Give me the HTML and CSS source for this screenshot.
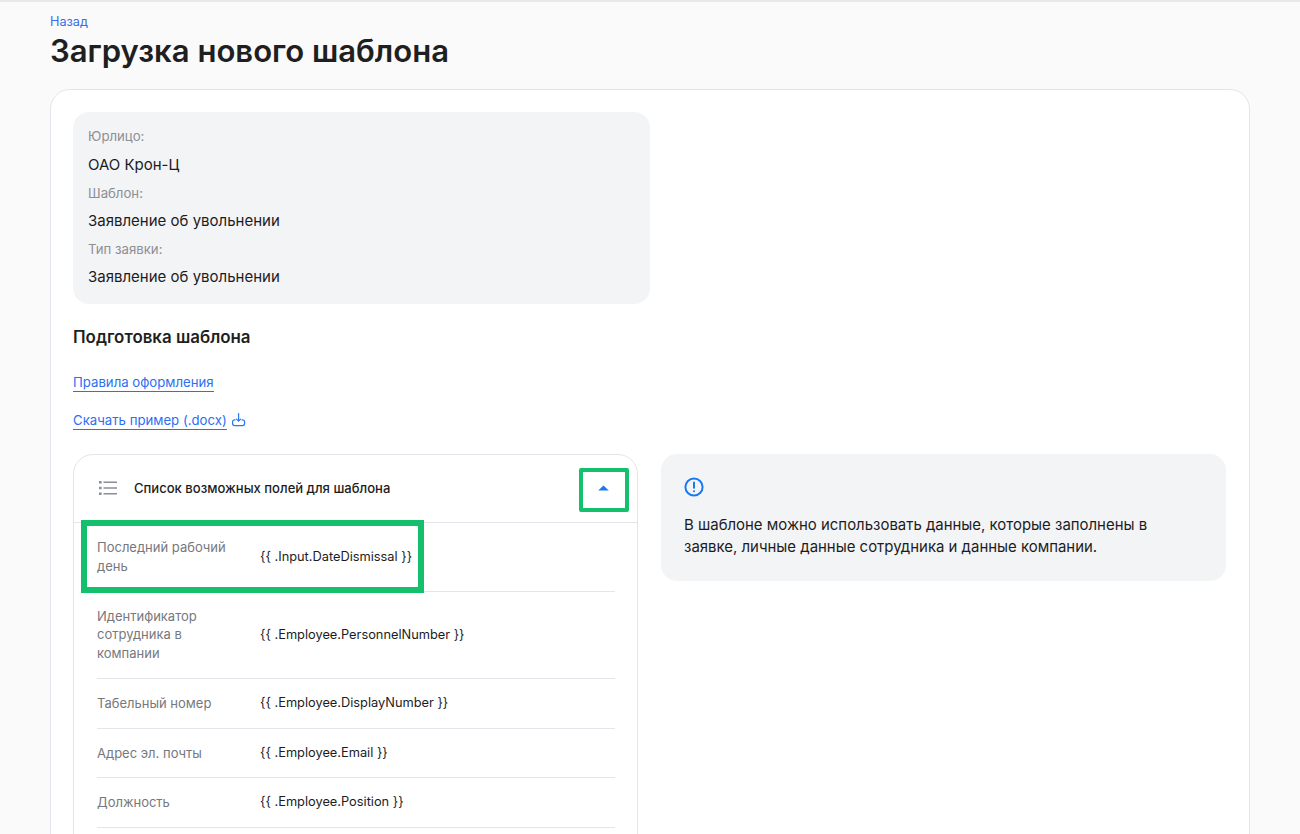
FILE: index.html
```html
<!DOCTYPE html>
<html lang="ru">
<head>
<meta charset="utf-8">
<title>Загрузка нового шаблона</title>
<link rel="stylesheet" href="styles.css">
</head>
<body>
<main class="page">
  <a class="back" href="#">Назад</a>
  <h1 class="title">Загрузка нового шаблона</h1>
  <section class="card">
    <div class="info">
      <div class="info-label">Юрлицо:</div>
      <div class="info-value">ОАО Крон-Ц</div>
      <div class="info-label">Шаблон:</div>
      <div class="info-value">Заявление об увольнении</div>
      <div class="info-label">Тип заявки:</div>
      <div class="info-value">Заявление об увольнении</div>
    </div>
    <h2 class="subtitle">Подготовка шаблона</h2>
    <div class="links">
      <div class="link-row"><a class="link" href="#">Правила оформления</a></div>
      <div class="link-row">
        <a class="link" href="#">Скачать пример (.docx)</a>
        <svg class="dl-icon" width="14" height="14" viewBox="0 0 14 14" fill="none" stroke="#2878f0" stroke-width="1.200" stroke-linecap="round" stroke-linejoin="round"><path d="M6.600.6v7.600M4.600 6.200l2 2 2-2"/><path d="M3.200 6.800h-.6a2 2 0 0 0-2 2v1.800a2 2 0 0 0 2 2h8a2 2 0 0 0 2-2V8.800a2 2 0 0 0-2-2H10"/></svg>
      </div>
    </div>
    <div class="columns">
      <div class="accordion">
        <div class="acc-head">
          <svg class="list-icon" width="20" height="20" viewBox="0 0 20 20" fill="none" stroke="#8b8e94" stroke-width="1.500"><path d="M4.500 4.200H18M4.500 10H18M4.500 15.800H18"/><path d="M0 4.200h2.600M0 10h2.600M0 15.800h2.600" stroke-width="2.400"/></svg>
          <span class="acc-title">Список возможных полей для шаблона</span>
          <button class="acc-toggle" type="button" aria-label="Свернуть"><svg width="11" height="6" viewBox="0 0 11 6"><path d="M5.500.4 10.800 5.600H.2z" fill="#1a78f0"/></svg></button>
        </div>
        <div class="rows">
          <div class="row row-first"><div class="row-name">Последний рабочий день</div><div class="row-code">{{ .Input.DateDismissal }}</div></div>
          <div class="row row-tall"><div class="row-name">Идентификатор сотрудника в компании</div><div class="row-code">{{ .Employee.PersonnelNumber }}</div></div>
          <div class="row"><div class="row-name">Табельный номер</div><div class="row-code">{{ .Employee.DisplayNumber }}</div></div>
          <div class="row"><div class="row-name">Адрес эл. почты</div><div class="row-code">{{ .Employee.Email }}</div></div>
          <div class="row"><div class="row-name">Должность</div><div class="row-code">{{ .Employee.Position }}</div></div>
        </div>
        <div class="mark mark-toggle"></div>
        <div class="mark mark-row"></div>
      </div>
      <aside class="note">
        <svg class="note-icon" width="20" height="20" viewBox="0 0 20 20" fill="none" stroke="#1a78f0" stroke-width="2" stroke-linecap="round"><circle cx="10" cy="10" r="8.600"/><path d="M10 5.600v5.200"/><path d="M10 14.200v.1"/></svg>
        <p class="note-text">В шаблоне можно использовать данные, которые заполнены в заявке, личные данные сотрудника и данные компании.</p>
      </aside>
    </div>
  </section>
</main>
</body>
</html>
```
FILE: styles.css
```css
* { box-sizing: border-box; }
html, body { margin: 0; height: 834px; overflow: hidden; }
body {
  background: #fafafa;
  border-top: 2px solid #e8e8e8;
  font-family: Inter, "Noto Sans", sans-serif;
  color: #1c1c1e;
}
.page { padding: 12px 50px 0; }
.back { display: block; font-size: 12.700px; line-height: 15px; color: #3b6cf0; text-decoration: none; }
.title { margin: 3px 0 0; font-size: 31.060px; line-height: 38px; font-weight: 600; color: #1f1f21; }
.card {
  margin-top: 19px;
  background: #fff;
  border: 1px solid #e4e5ea;
  border-radius: 20px;
  padding: 22px 23px 22px 22px;
  height: 900px;
}
.info {
  width: 577px;
  height: 192px;
  padding: 14.400px 15px;
  background: #f3f4f6;
  border-radius: 16px;
}
.info-label { font-size: 13.200px; line-height: 20px; color: #8e8f93; }
.info-value { font-size: 15px; line-height: 18px; margin: 9.500px 0 8.650px; color: #1c1c1e; }
.subtitle { margin: 23px 0 0; font-size: 16.900px; line-height: 20px; font-weight: 600; color: #1f1f21; }
.links { margin-top: 25px; }
.link-row { display: flex; align-items: center; gap: 5px; height: 20px; margin-bottom: 18px; }
.link { font-size: 13.200px; line-height: 18px; color: #2b6ff2; text-decoration: none; border-bottom: 1px solid #2b6ff2; }
.columns { display: flex; align-items: flex-start; gap: 23px; margin-top: 24px; }
.accordion {
  position: relative;
  width: 565px;
  height: 600px;
  flex: none;
  border: 1px solid #e4e5ea;
  border-radius: 20px;
}
.acc-head { display: flex; align-items: center; height: 68px; padding: 0 25px 1px; border-bottom: 1px solid #e4e5ea; }
.list-icon { flex: none; }
.acc-title { margin-left: 15px; font-size: 13.050px; font-weight: 500; color: #1c1c1e; }
.acc-toggle { margin-left: auto; margin-right: -1px; width: 20px; height: 20px; padding: 0; background: none; border: 0; display: flex; align-items: center; justify-content: center; }
.rows { padding: 0 22px 0 23px; }
.row { display: flex; align-items: center; padding: 15.300px 0 14.800px; border-bottom: 1px solid #e4e5ea; }
.row-first { padding-bottom: 16.100px; }
.row-name { width: 163px; flex: none; padding-right: 25px; font-size: 13px; line-height: 18.500px; color: #76787d; }
.row-tall .row-name { margin: -1px 0 1px; }
.row-code { font-size: 12.800px; line-height: 18.500px; color: #1c1c1e; }
.note {
  width: 565px;
  height: 127px;
  padding: 23px 23px;
  background: #f3f4f6;
  border-radius: 16px;
}
.note-icon { display: block; }
.note-text { margin: 16.600px 0 0; font-size: 14.940px; line-height: 22.400px; color: #1c1c1e; }
.mark { position: absolute; border: 6px solid #14c06c; }
.mark-toggle { left: 504.500px; top: 13px; width: 50px; height: 44px; border-width: 4px; border-radius: 2px; }
.mark-row { left: 7px; top: 65px; width: 343px; height: 73px; }
```
